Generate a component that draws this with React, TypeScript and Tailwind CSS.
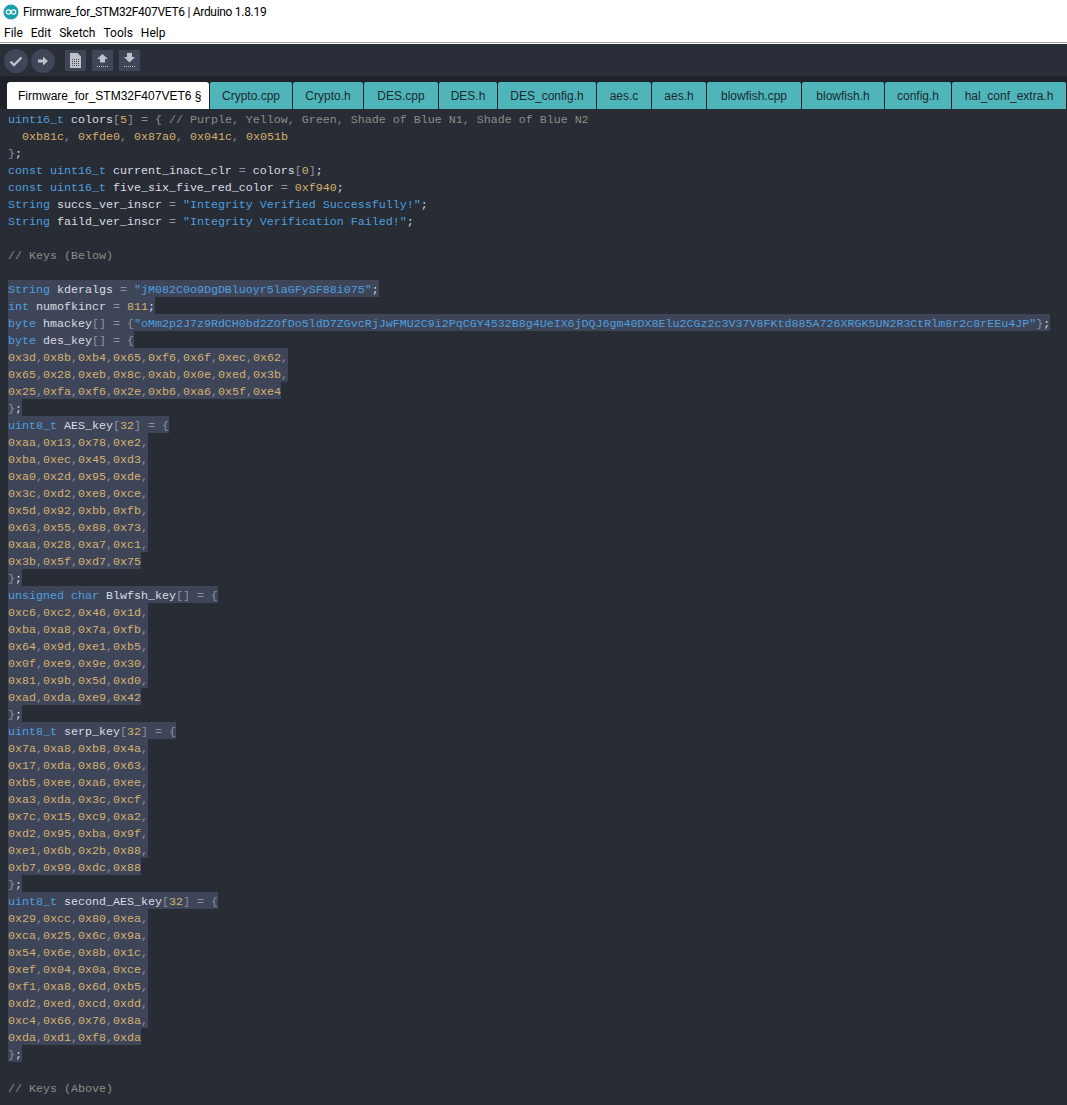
const KW = 'text-[#4f9fdf]';
const ID = 'text-[#d9dde3]';
const PN = 'text-[#8b949c]';
const NM = 'text-[#d6b26e]';
const CM = 'text-[#8c8d88]';
const ST = 'text-[#4f9fdf]';

type Token = [string, string];

interface Line {
  tokens: Token[];
  selected?: boolean;
}

const tabs = [
  { name: 'Crypto.cpp', width: 'w-[82px]' },
  { name: 'Crypto.h', width: 'w-[70px]' },
  { name: 'DES.cpp', width: 'w-[74px]' },
  { name: 'DES.h', width: 'w-[58px]' },
  { name: 'DES_config.h', width: 'w-[98px]' },
  { name: 'aes.c', width: 'w-[54px]' },
  { name: 'aes.h', width: 'w-[54px]' },
  { name: 'blowfish.cpp', width: 'w-[94px]' },
  { name: 'blowfish.h', width: 'w-[82px]' },
  { name: 'config.h', width: 'w-[66px]' },
  { name: 'hal_conf_extra.h', width: 'w-[114px]' },
];

function hex(text: string): Line {
  const tokens: Token[] = [];
  const parts = text.split(',');
  parts.forEach((part, i) => {
    if (part) tokens.push([NM, part]);
    if (i < parts.length - 1) tokens.push([PN, ',']);
  });
  return { tokens, selected: true };
}

function decl(type: Token[], name: string, size: string): Line {
  return {
    tokens: [...type, [ID, ' ' + name], [PN, '['], [NM, size], [PN, '] = {']],
    selected: true,
  };
}

const close: Line = { tokens: [[PN, '}'], [ID, ';']], selected: true };
const blank: Line = { tokens: [] };

const lines: Line[] = [
  {
    tokens: [
      [KW, 'uint16_t'],
      [ID, ' colors'],
      [PN, '['],
      [NM, '5'],
      [PN, '] = { '],
      [CM, '// Purple, Yellow, Green, Shade of Blue N1, Shade of Blue N2'],
    ],
  },
  {
    tokens: [
      [NM, '  0xb81c'],
      [PN, ', '],
      [NM, '0xfde0'],
      [PN, ', '],
      [NM, '0x87a0'],
      [PN, ', '],
      [NM, '0x041c'],
      [PN, ', '],
      [NM, '0x051b'],
    ],
  },
  { tokens: [[PN, '}'], [ID, ';']] },
  {
    tokens: [
      [KW, 'const uint16_t'],
      [ID, ' current_inact_clr '],
      [PN, '= '],
      [ID, 'colors'],
      [PN, '['],
      [NM, '0'],
      [PN, ']'],
      [ID, ';'],
    ],
  },
  {
    tokens: [
      [KW, 'const uint16_t'],
      [ID, ' five_six_five_red_color '],
      [PN, '= '],
      [NM, '0xf940'],
      [ID, ';'],
    ],
  },
  {
    tokens: [
      [KW, 'String'],
      [ID, ' succs_ver_inscr '],
      [PN, '= '],
      [ST, '"Integrity Verified Successfully!"'],
      [ID, ';'],
    ],
  },
  {
    tokens: [
      [KW, 'String'],
      [ID, ' faild_ver_inscr '],
      [PN, '= '],
      [ST, '"Integrity Verification Failed!"'],
      [ID, ';'],
    ],
  },
  blank,
  { tokens: [[CM, '// Keys (Below)']] },
  blank,
  {
    tokens: [
      [KW, 'String'],
      [ID, ' kderalgs '],
      [PN, '= '],
      [ST, '"jM082C0o9DgDBluoyr5laGFySF88i075"'],
      [ID, ';'],
    ],
    selected: true,
  },
  {
    tokens: [
      [KW, 'int'],
      [ID, ' numofkincr '],
      [PN, '= '],
      [NM, '811'],
      [ID, ';'],
    ],
    selected: true,
  },
  {
    tokens: [
      [KW, 'byte'],
      [ID, ' hmackey'],
      [PN, '[] = {'],
      [
        ST,
        '"oMm2p2J7z9RdCH0bd2ZOfDo5ldD7ZGvcRjJwFMU2C9i2PqCGY4532B8g4UeIX6jDQJ6gm40DX8Elu2CGz2c3V37V8FKtd885A726XRGK5UN2R3CtRlm8r2c8rEEu4JP"',
      ],
      [PN, '}'],
      [ID, ';'],
    ],
    selected: true,
  },
  {
    tokens: [
      [KW, 'byte'],
      [ID, ' des_key'],
      [PN, '[] = {'],
    ],
    selected: true,
  },
  hex('0x3d,0x8b,0xb4,0x65,0xf6,0x6f,0xec,0x62,'),
  hex('0x65,0x28,0xeb,0x8c,0xab,0x0e,0xed,0x3b,'),
  hex('0x25,0xfa,0xf6,0x2e,0xb6,0xa6,0x5f,0xe4'),
  close,
  decl([[KW, 'uint8_t']], 'AES_key', '32'),
  hex('0xaa,0x13,0x78,0xe2,'),
  hex('0xba,0xec,0x45,0xd3,'),
  hex('0xa0,0x2d,0x95,0xde,'),
  hex('0x3c,0xd2,0xe8,0xce,'),
  hex('0x5d,0x92,0xbb,0xfb,'),
  hex('0x63,0x55,0x88,0x73,'),
  hex('0xaa,0x28,0xa7,0xc1,'),
  hex('0x3b,0x5f,0xd7,0x75'),
  close,
  {
    tokens: [
      [KW, 'unsigned char'],
      [ID, ' Blwfsh_key'],
      [PN, '[] = {'],
    ],
    selected: true,
  },
  hex('0xc6,0xc2,0x46,0x1d,'),
  hex('0xba,0xa8,0x7a,0xfb,'),
  hex('0x64,0x9d,0xe1,0xb5,'),
  hex('0x0f,0xe9,0x9e,0x30,'),
  hex('0x81,0x9b,0x5d,0xd0,'),
  hex('0xad,0xda,0xe9,0x42'),
  close,
  decl([[KW, 'uint8_t']], 'serp_key', '32'),
  hex('0x7a,0xa8,0xb8,0x4a,'),
  hex('0x17,0xda,0x86,0x63,'),
  hex('0xb5,0xee,0xa6,0xee,'),
  hex('0xa3,0xda,0x3c,0xcf,'),
  hex('0x7c,0x15,0xc9,0xa2,'),
  hex('0xd2,0x95,0xba,0x9f,'),
  hex('0xe1,0x6b,0x2b,0x88,'),
  hex('0xb7,0x99,0xdc,0x88'),
  close,
  decl([[KW, 'uint8_t']], 'second_AES_key', '32'),
  hex('0x29,0xcc,0x80,0xea,'),
  hex('0xca,0x25,0x6c,0x9a,'),
  hex('0x54,0x6e,0x8b,0x1c,'),
  hex('0xef,0x04,0x0a,0xce,'),
  hex('0xf1,0xa8,0x6d,0xb5,'),
  hex('0xd2,0xed,0xcd,0xdd,'),
  hex('0xc4,0x66,0x76,0x8a,'),
  hex('0xda,0xd1,0xf8,0xda'),
  close,
  blank,
  { tokens: [[CM, '// Keys (Above)']] },
];

function ArduinoLogo() {
  return (
    <svg width="16" height="16" viewBox="0 0 16 16" className="ml-[2px] shrink-0">
      <circle cx="8" cy="8" r="7.5" fill="#17a1a5" />
      <circle cx="5.500" cy="8" r="2.200" fill="none" stroke="#fff" strokeWidth="1.200" />
      <circle cx="10.500" cy="8" r="2.200" fill="none" stroke="#fff" strokeWidth="1.200" />
    </svg>
  );
}

function RoundButton({ children }: { children: React.ReactNode }) {
  return (
    <div className="w-[24px] h-[24px] rounded-full bg-[#3f4657] flex items-center justify-center">
      {children}
    </div>
  );
}

function SquareButton({ children }: { children: React.ReactNode }) {
  return <div className="w-[21px] h-[21px] bg-[#3f4657]">{children}</div>;
}

function Dots() {
  return <path d="M5 16.500h11" stroke="#bfc2c8" strokeWidth="1" strokeDasharray="1 1" fill="none" />;
}

export default function App() {
  return (
    <div className="h-[1105px] w-[1067px] overflow-hidden flex flex-col bg-[#282c34]">
      {/* Title bar */}
      <div className="h-[22px] bg-white flex items-center gap-[4px] pl-[1px] pt-[1px] font-['Roboto',sans-serif] text-[12px] text-black">
        <ArduinoLogo />
        <span className="tracking-[-0.3px]">Firmware_for_STM32F407VET6 | Arduino 1.8.19</span>
      </div>

      {/* Menu */}
      <div className="h-[20px] bg-white flex items-center gap-[8px] pl-[4px] pt-[2px] font-['Roboto',sans-serif] text-[12px] text-black">
        <span>File</span>
        <span>Edit</span>
        <span>Sketch</span>
        <span>Tools</span>
        <span>Help</span>
      </div>
      <div className="h-[2px] bg-[#a0a0a0] border-b border-white" />

      {/* Toolbar */}
      <div className="h-[32px] bg-[#2a2e38] flex items-center pl-[4px] pt-[1px]">
        <div className="flex gap-[3px]">
          <RoundButton>
            <svg width="14" height="14" viewBox="0 0 14 14">
              <path d="M1.500 7.500 5 11 12.500 3.500" fill="none" stroke="#bfc2c8" strokeWidth="2.400" />
            </svg>
          </RoundButton>
          <RoundButton>
            <svg width="14" height="14" viewBox="0 0 14 14">
              <path d="M2 5.500h5V2.500L12 7 7 11.500v-3H2z" fill="#bfc2c8" />
            </svg>
          </RoundButton>
        </div>
        <div className="flex gap-[6px] ml-[10px]">
          <SquareButton>
            <svg width="21" height="21" viewBox="0 0 21 21">
              <path d="M5 3h7.500L16 6.500V18H5z" fill="#bfc2c8" />
              <path
                d="M7 9.500h7M7 11.500h7M7 13.500h7M7 15.500h7"
                stroke="#3f4657"
                strokeWidth="1"
                strokeDasharray="1 1"
                fill="none"
              />
            </svg>
          </SquareButton>
          <SquareButton>
            <svg width="21" height="21" viewBox="0 0 21 21">
              <path d="M10.500 4 16 9h-3v3.500H8V9H5z" fill="#bfc2c8" />
              <Dots />
            </svg>
          </SquareButton>
          <SquareButton>
            <svg width="21" height="21" viewBox="0 0 21 21">
              <path d="M8 3h5v4h3l-5.500 5.500L5 7h3z" fill="#bfc2c8" />
              <Dots />
            </svg>
          </SquareButton>
        </div>
      </div>

      {/* Tabs */}
      <div className="h-[33px] bg-[#1f2228] pt-[6px] pl-[7px] flex gap-[1px] font-['Liberation_Sans',sans-serif] text-[12px] text-[#1c2a30]">
        <div className="w-[202px] bg-white text-black rounded-tl-[3px] rounded-tr-[3px] flex items-center pl-[11px]">
          Firmware_for_STM32F407VET6 §
        </div>
        {tabs.map((tab) => (
          <div
            key={tab.name}
            className={`${tab.width} bg-[#4fb5ba] rounded-tl-[2px] rounded-tr-[2px] flex items-center justify-center`}
          >
            {tab.name}
          </div>
        ))}
      </div>

      {/* Editor */}
      <div className="flex-1 pt-[1px] pl-[8px] font-['Liberation_Mono',monospace] text-[11.67px] leading-[21px] whitespace-pre">
        {lines.map((line, i) => (
          <div key={i} className={`h-[17px] w-fit ${line.selected ? 'bg-[#3e4559]' : ''}`}>
            {line.tokens.map(([cls, text], j) => (
              <span key={j} className={cls}>
                {text}
              </span>
            ))}
          </div>
        ))}
      </div>
    </div>
  );
}
